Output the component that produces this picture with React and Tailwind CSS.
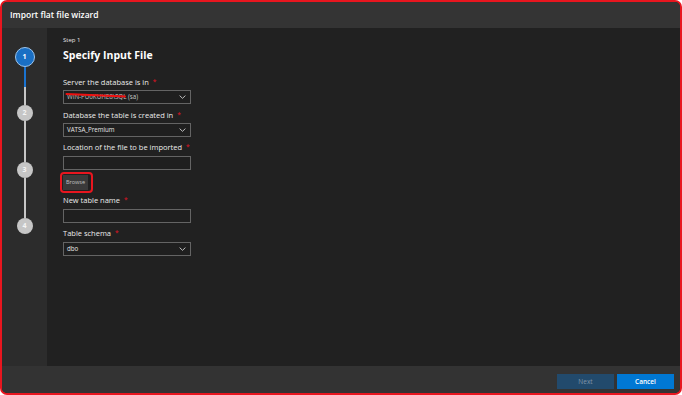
import React from "react";

function Chevron() {
  return (
    <svg width="7" height="4" viewBox="0 0 7 4" className="shrink-0">
      <path d="M0.6 0.6 L3.5 3.3 L6.4 0.6" fill="none" stroke="#d0d0d0" strokeWidth="0.9" />
    </svg>
  );
}

function Label({ children, className = "" }) {
  return (
    <div className={`text-[7.5px] leading-[10px] text-[#ececec] ${className}`}>
      {children}
      <span className="text-[#e81123] ml-[4px] text-[6.5px] align-top">*</span>
    </div>
  );
}

function Select({ value, className = "", textClass = "text-[#e8e8e8]", children }) {
  return (
    <div
      className={`relative w-[128px] h-[14px] border border-[#646464] bg-[#1f1f1f] flex items-center justify-between pl-[3px] pr-[4px] ${className}`}
    >
      <span className={`text-[6.2px] leading-[8px] ${textClass}`}>{value}</span>
      <Chevron />
      {children}
    </div>
  );
}

function Input({ className = "" }) {
  return <div className={`w-[128px] h-[14px] border border-[#646464] bg-[#1f1f1f] ${className}`} />;
}

function Step({ n, active }) {
  if (active) {
    return (
      <div className="w-[20px] h-[20px] rounded-full bg-[#1a6fc4] border-[1.5px] border-[#9cc5ee] flex items-center justify-center text-white text-[7px] font-bold">
        {n}
      </div>
    );
  }
  return (
    <div className="w-[16px] h-[16px] rounded-full bg-[#c6c6c6] flex items-center justify-center text-[#f4f4f4] text-[7px] font-bold">
      {n}
    </div>
  );
}

export default function App() {
  return (
    <div
      className="w-[682px] h-[395px] border-2 border-[#e8161f] rounded-[7px] overflow-hidden flex flex-col bg-[#212121]"
      style={{ fontFamily: '"Open Sans", "Noto Sans", sans-serif' }}
    >
      <div className="h-[26px] shrink-0 bg-[#343434] flex items-center pl-[8px] text-white text-[8.5px] font-semibold">
        Import flat file wizard
      </div>
      <div className="flex flex-1 min-h-0">
        <div className="w-[45px] shrink-0 bg-[#2c2c2c] flex flex-col items-center pt-[19px]">
          <Step n="1" active />
          <div className="w-[2px] h-[38px] flex flex-col">
            <div className="h-[20px] bg-[#1a73d0]" />
            <div className="flex-1 bg-[#c6c6c6]" />
          </div>
          <Step n="2" />
          <div className="w-[2px] h-[41px] bg-[#c6c6c6]" />
          <Step n="3" />
          <div className="w-[2px] h-[40px] bg-[#c6c6c6]" />
          <Step n="4" />
        </div>
        <div className="flex-1 bg-[#212121] pl-[16px] pt-[8px] flex flex-col items-start">
          <div className="text-[6px] leading-[8px] text-[#e6e6e6]">Step 1</div>
          <div className="mt-[5px] text-[10.5px] leading-[12px] font-bold text-white">Specify Input File</div>

          <Label className="mt-[16px]">Server the database is in</Label>
          <Select value="WIN-PU6KUHE8\SQL (sa)" textClass="text-[#c8c8c8]" className="mt-[3px]">
            <svg className="absolute left-[1px] top-[1px]" width="62" height="8" viewBox="0 0 62 8">
              <path d="M1.5 2 L60 4.5" stroke="#ee1111" strokeWidth="2" strokeLinecap="round" fill="none" />
            </svg>
          </Select>

          <Label className="mt-[6px]">Database the table is created in</Label>
          <Select value="VATSA_Premium" className="mt-[3px]" />

          <Label className="mt-[5px]">Location of the file to be imported</Label>
          <Input className="mt-[4px]" />

          <div className="relative mt-[5px]">
            <div className="w-[25px] h-[15px] bg-[#3a3a3a] flex items-center justify-center text-[5.5px] text-[#c0c0c0]">
              Browse
            </div>
            <span className="absolute -left-[3px] -top-[3px] -right-[5px] -bottom-[3px] border-2 border-[#e8161f] rounded-[4px]" />
          </div>

          <Label className="mt-[5px]">New table name</Label>
          <Input className="mt-[4px]" />

          <Label className="mt-[5px]">Table schema</Label>
          <Select value="dbo" className="mt-[4px]" />
        </div>
      </div>
      <div className="h-[27px] shrink-0 bg-[#333333] flex justify-end items-start gap-[3px] pr-[6px] pt-[8px]">
        <div className="w-[57px] h-[15px] bg-[#224a6c] flex items-center justify-center text-[6.5px] text-[#7f95a8]">
          Next
        </div>
        <div className="w-[57px] h-[15px] bg-[#0078d4] flex items-center justify-center text-[6.5px] font-semibold text-white">
          Cancel
        </div>
      </div>
    </div>
  );
}
